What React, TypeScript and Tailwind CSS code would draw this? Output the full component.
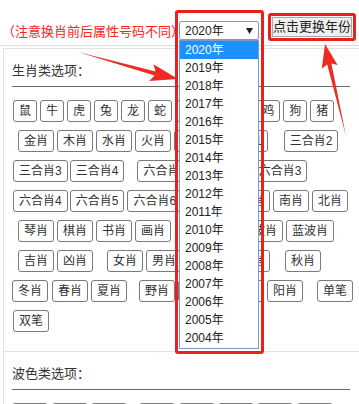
// Zodiac option picker with year dropdown (annotated screenshot)

const FONT = "font-['Liberation_Sans','Noto_Sans_CJK_SC',sans-serif]";

type Tag = { t: string; ml: string };

const YEARS = [
  "2020年", "2019年", "2018年", "2017年", "2016年", "2015年", "2014年", "2013年", "2012年",
  "2011年", "2010年", "2009年", "2008年", "2007年", "2006年", "2005年", "2004年",
];

const ZODIAC_ROWS: Tag[][] = [
  [
    { t: "鼠", ml: "ml-[1px]" }, { t: "牛", ml: "ml-[3px]" }, { t: "虎", ml: "ml-[3px]" },
    { t: "兔", ml: "ml-[3px]" }, { t: "龙", ml: "ml-[3px]" }, { t: "蛇", ml: "ml-[3px]" },
    { t: "马", ml: "ml-[3px]" }, { t: "羊", ml: "ml-[3px]" }, { t: "猴", ml: "ml-[3px]" },
    { t: "鸡", ml: "ml-[3px]" }, { t: "狗", ml: "ml-[3px]" }, { t: "猪", ml: "ml-[3px]" },
  ],
  [
    { t: "金肖", ml: "ml-[6px]" }, { t: "木肖", ml: "ml-[3px]" }, { t: "水肖", ml: "ml-[3px]" },
    { t: "火肖", ml: "ml-[3px]" }, { t: "土肖", ml: "ml-[3px]" }, { t: "三合肖1", ml: "ml-[3px]" },
    { t: "三合肖2", ml: "ml-[16px]" },
  ],
  [
    { t: "三合肖3", ml: "ml-[1px]" }, { t: "三合肖4", ml: "ml-[2px]" }, { t: "六合肖1", ml: "ml-[13px]" },
    { t: "六合肖2", ml: "ml-[3px]" }, { t: "六合肖3", ml: "ml-[3px]" },
  ],
  [
    { t: "六合肖4", ml: "ml-[1px]" }, { t: "六合肖5", ml: "ml-[2px]" }, { t: "六合肖6", ml: "ml-[3px]" },
    { t: "东肖", ml: "ml-[13px]" }, { t: "西肖", ml: "ml-[3px]" }, { t: "南肖", ml: "ml-[3px]" },
    { t: "北肖", ml: "ml-[3px]" },
  ],
  [
    { t: "琴肖", ml: "ml-[6px]" }, { t: "棋肖", ml: "ml-[3px]" }, { t: "书肖", ml: "ml-[3px]" },
    { t: "画肖", ml: "ml-[3px]" }, { t: "红波肖", ml: "ml-[13px]" }, { t: "绿波肖", ml: "ml-[3px]" },
    { t: "蓝波肖", ml: "ml-[3px]" },
  ],
  [
    { t: "吉肖", ml: "ml-[6px]" }, { t: "凶肖", ml: "ml-[3px]" }, { t: "女肖", ml: "ml-[14px]" },
    { t: "男肖", ml: "ml-[3px]" }, { t: "天肖", ml: "ml-[13px]" }, { t: "地肖", ml: "ml-[3px]" },
    { t: "秋肖", ml: "ml-[15px]" },
  ],
  [
    { t: "冬肖", ml: "ml-0" }, { t: "春肖", ml: "ml-[4px]" }, { t: "夏肖", ml: "ml-[3px]" },
    { t: "野肖", ml: "ml-[12px]" }, { t: "家肖", ml: "ml-[3px]" }, { t: "阴肖", ml: "ml-[14px]" },
    { t: "阳肖", ml: "ml-[3px]" }, { t: "单笔", ml: "ml-[14px]" },
  ],
  [{ t: "双笔", ml: "ml-[1px]" }],
];

const COLOR_ROWS: Tag[][] = [
  [
    { t: "红波", ml: "ml-0" }, { t: "蓝波", ml: "ml-[4px]" }, { t: "绿波", ml: "ml-[3px]" },
    { t: "红单", ml: "ml-[12px]" }, { t: "红双", ml: "ml-[4px]" }, { t: "蓝单", ml: "ml-[3px]" },
    { t: "蓝双", ml: "ml-[3px]" }, { t: "绿单", ml: "ml-[4px]" },
  ],
];

const TagButton = ({ tag }: { tag: Tag }) => (
  <button
    className={`${tag.ml} h-[22px] shrink-0 rounded-[3px] border border-[#7a7a7a] bg-white px-[5px] text-[12px] leading-[20px] text-[#333]`}
  >
    {tag.t}
  </button>
);

const OptionGroup = ({ title, rows }: { title: string; rows: Tag[][] }) => (
  <div className="ml-[3px] border-l border-t border-[#e3e3e3] pb-[19px] pl-[8px] pt-[12px]">
    <div className="mr-[9px] border-b border-[#6b6b6b] pb-[5px] text-[13px] leading-[20px] text-[#333]">
      {title}
    </div>
    <div className="mt-[13px] flex flex-col gap-[8px]">
      {rows.map((row, i) => (
        <div key={i} className="flex h-[22px] items-center">
          {row.map((tag) => (
            <TagButton key={tag.t} tag={tag} />
          ))}
        </div>
      ))}
    </div>
  </div>
);

const YearSelect = () => (
  <div className="relative mt-[21px] h-[19px] w-[80px] shrink-0">
    <div className="flex h-full items-center justify-between rounded-[2px] border border-[#8298c0] bg-white px-[5px] text-[12px] text-[#222]">
      <span>2020年</span>
      <svg width="7" height="6" viewBox="0 0 7 6">
        <path d="M0 0H7L3.5 6Z" fill="#222" />
      </svg>
    </div>
    <div className="absolute left-0 top-[19px] z-10 h-[309px] w-[80px] border border-[#8298c0] bg-white">
      {YEARS.map((y, i) => (
        <div
          key={y}
          className={`h-[18px] pl-[5px] text-[12px] leading-[18px] ${i === 0 ? "bg-[#1e90ff] text-white" : "text-[#222]"}`}
        >
          {y}
        </div>
      ))}
    </div>
    <div className="pointer-events-none absolute -left-[4px] -top-[11px] z-20 h-[344px] w-[89px] rounded-[3px] border-[3px] border-[#e8211a]" />
  </div>
);

export default function App() {
  return (
    <div className={`relative h-[404px] w-[359px] overflow-hidden bg-white ${FONT}`}>
      <div className="flex h-[46px] items-start border-b border-[#dcdcdc]">
        <span className="mt-[23px] w-[179px] shrink-0 whitespace-nowrap pl-[2px] text-[13px] leading-[17px] text-[#f22]">
          （注意换肖前后属性号码不同）:
        </span>
        <YearSelect />
        <div className="ml-[9px] mt-[13px] shrink-0 rounded-[3px] border-[3px] border-[#e8211a] p-[1px]">
          <button className="flex h-[20px] w-[80px] items-center justify-center border border-[#a9a9a9] bg-[#efefef] text-[13px] text-[#222]">
            点击更换年份
          </button>
        </div>
      </div>
      <div className="mt-[2px]">
        <OptionGroup title="生肖类选项：" rows={ZODIAC_ROWS} />
        <OptionGroup title="波色类选项：" rows={COLOR_ROWS} />
      </div>
      <svg className="pointer-events-none absolute left-0 top-0 z-30" width="359" height="404" viewBox="0 0 359 404">
        <polygon points="78,52 155.6,71.4 153.4,64.2 178,79 149.2,81 154.6,75.6" fill="#ee2a24" />
        <polygon points="346,136 331.4,63.6 337.6,65 325,44 321.8,68.6 327.2,64.4" fill="#ee2a24" />
      </svg>
    </div>
  );
}
